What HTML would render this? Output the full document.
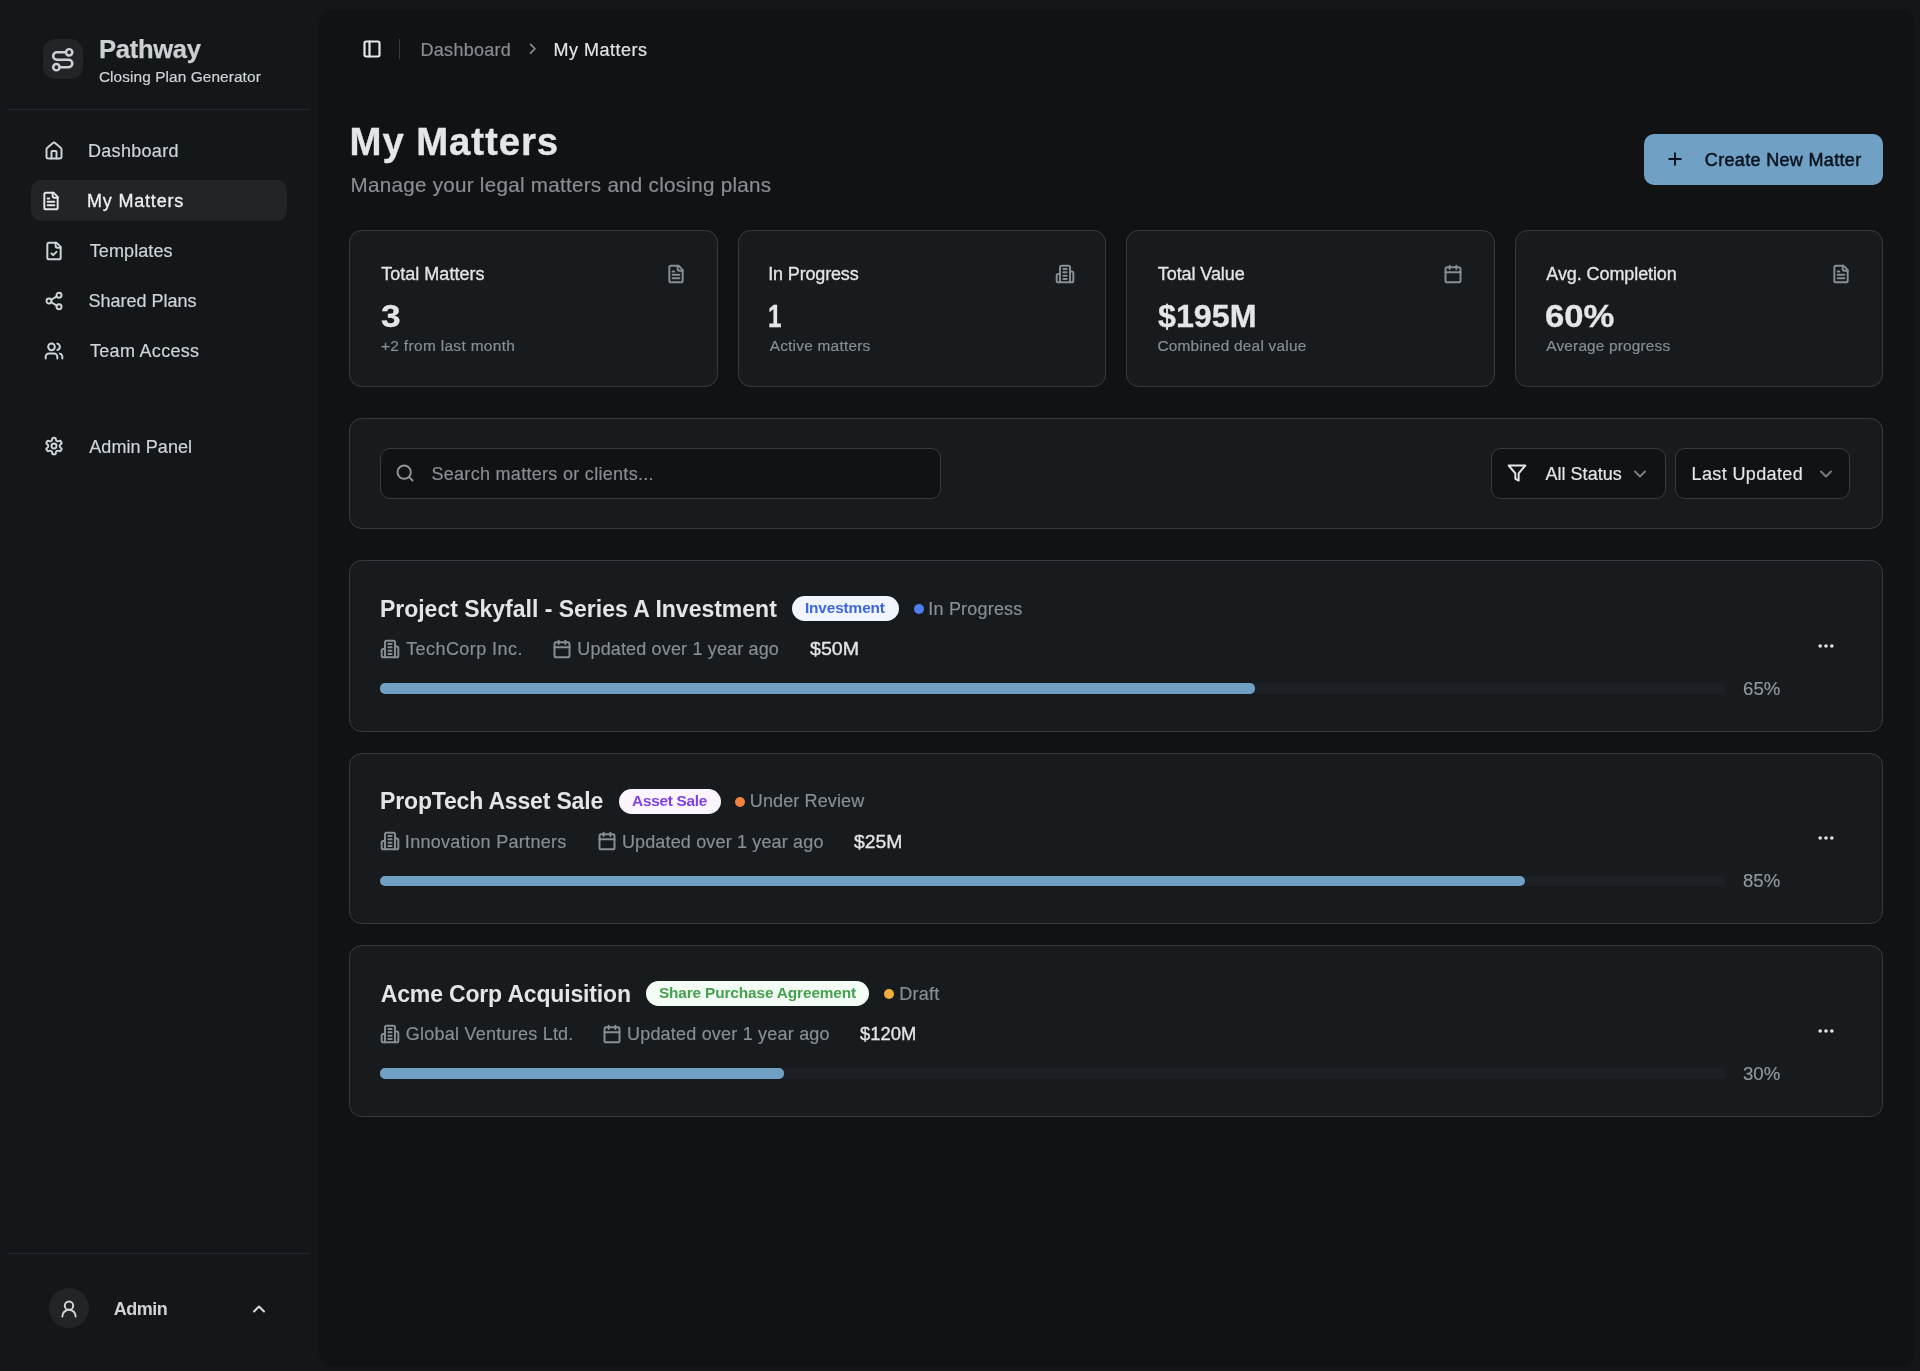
<!DOCTYPE html>
<html lang="en"><head><meta charset="utf-8"><title>My Matters - Pathway</title>
<style>
*{margin:0;padding:0;}
html,body{width:1920px;height:1371px;overflow:hidden;background:#13171a;}
body{position:relative;font-family:"Liberation Sans",Arial,sans-serif;-webkit-font-smoothing:antialiased;}
div,svg.ic,.t{position:absolute;}
#root{left:0;top:0;width:1920px;height:1371px;will-change:transform;}
.t{white-space:nowrap;line-height:1;font-weight:400;text-decoration:none;display:block;}
.card{background:#181b1e;border:1px solid #373b3f;border-radius:12.5px;box-sizing:border-box;}
</style></head>
<body>
<div id="root">
<aside>
<div style="left:43px;top:38.9px;width:40.4px;height:40.4px;background:#212528;border-radius:12.5px;"></div>
<svg class="ic" style="left:50.45px;top:47.05px;width:25.5px;height:25.5px;color:#cdd0d3;" viewBox="0 0 24 24" fill="none" stroke="currentColor" stroke-width="2.35" stroke-linecap="round" stroke-linejoin="round"><circle cx="6" cy="19" r="3"/><path d="M9 19h8.5a3.5 3.5 0 0 0 0-7h-11a3.5 3.5 0 0 1 0-7H15"/><circle cx="18" cy="5" r="3"/></svg>
<div id="brand" class="t" style="left:99.03px;top:36.98px;font-size:25.6px;color:#cdd0d3;letter-spacing:-0.315px;font-weight:700;-webkit-text-stroke:0.25px #cdd0d3;">Pathway</div>
<div id="brand2" class="t" style="left:98.91px;top:68.56px;font-size:15.4px;color:#d0d3d6;letter-spacing:0.089px;-webkit-text-stroke:0.18px #d0d3d6;">Closing Plan Generator</div>
<div style="left:8px;top:109px;width:302px;height:1.25px;background:#23272b;"></div>
<nav>
<svg class="ic" style="left:43.60px;top:140.90px;width:20px;height:20px;color:#d0d4d7;" viewBox="0 0 24 24" fill="none" stroke="currentColor" stroke-width="2.35" stroke-linecap="round" stroke-linejoin="round"><path d="M15 21v-8a1 1 0 0 0-1-1h-4a1 1 0 0 0-1 1v8"/><path d="M3 10a2 2 0 0 1 .709-1.528l7-5.999a2 2 0 0 1 2.582 0l7 5.999A2 2 0 0 1 21 10v9a2 2 0 0 1-2 2H5a2 2 0 0 1-2-2z"/></svg>
<a id="nav0" class="t" style="left:88.02px;top:142.41px;font-size:18px;color:#d0d4d7;letter-spacing:0.298px;-webkit-text-stroke:0.18px #d0d4d7;">Dashboard</a>
<div style="left:31px;top:180px;width:255.5px;height:40.75px;background:#212528;border-radius:10px;"></div>
<svg class="ic" style="left:41.40px;top:190.90px;width:20px;height:20px;color:#e4e6e8;" viewBox="0 0 24 24" fill="none" stroke="currentColor" stroke-width="2.35" stroke-linecap="round" stroke-linejoin="round"><path d="M15 2H6a2 2 0 0 0-2 2v16a2 2 0 0 0 2 2h12a2 2 0 0 0 2-2V7Z"/><path d="M14 2v4a2 2 0 0 0 2 2h4"/><path d="M10 9H8"/><path d="M16 13H8"/><path d="M16 17H8"/></svg>
<a id="nav1" class="t" style="left:86.96px;top:192.41px;font-size:18px;color:#f0f1f2;letter-spacing:0.812px;-webkit-text-stroke:0.3px #f0f1f2;">My Matters</a>
<svg class="ic" style="left:43.60px;top:240.90px;width:20px;height:20px;color:#d0d4d7;" viewBox="0 0 24 24" fill="none" stroke="currentColor" stroke-width="2.35" stroke-linecap="round" stroke-linejoin="round"><path d="M15 2H6a2 2 0 0 0-2 2v16a2 2 0 0 0 2 2h12a2 2 0 0 0 2-2V7Z"/><path d="M14 2v4a2 2 0 0 0 2 2h4"/><path d="m9 15 2 2 4-4"/></svg>
<a id="nav2" class="t" style="left:89.71px;top:242.41px;font-size:18px;color:#d0d4d7;letter-spacing:0.104px;-webkit-text-stroke:0.18px #d0d4d7;">Templates</a>
<svg class="ic" style="left:43.60px;top:290.90px;width:20px;height:20px;color:#d0d4d7;" viewBox="0 0 24 24" fill="none" stroke="currentColor" stroke-width="2.35" stroke-linecap="round" stroke-linejoin="round"><circle cx="18" cy="5" r="3"/><circle cx="6" cy="12" r="3"/><circle cx="18" cy="19" r="3"/><line x1="8.59" x2="15.42" y1="13.51" y2="17.49"/><line x1="15.41" x2="8.59" y1="6.51" y2="10.49"/></svg>
<a id="nav3" class="t" style="left:88.52px;top:292.41px;font-size:18px;color:#d0d4d7;letter-spacing:-0.000px;-webkit-text-stroke:0.18px #d0d4d7;">Shared Plans</a>
<svg class="ic" style="left:43.60px;top:340.90px;width:20px;height:20px;color:#d0d4d7;" viewBox="0 0 24 24" fill="none" stroke="currentColor" stroke-width="2.35" stroke-linecap="round" stroke-linejoin="round"><path d="M16 21v-2a4 4 0 0 0-4-4H6a4 4 0 0 0-4 4v2"/><circle cx="9" cy="7" r="4"/><path d="M22 21v-2a4 4 0 0 0-3-3.87"/><path d="M16 3.13a4 4 0 0 1 0 7.75"/></svg>
<a id="nav4" class="t" style="left:90.00px;top:342.41px;font-size:18px;color:#d0d4d7;letter-spacing:0.300px;-webkit-text-stroke:0.18px #d0d4d7;">Team Access</a>
<svg class="ic" style="left:43.60px;top:436.40px;width:20px;height:20px;color:#d0d4d7;" viewBox="0 0 24 24" fill="none" stroke="currentColor" stroke-width="2.35" stroke-linecap="round" stroke-linejoin="round"><path d="M12.22 2h-.44a2 2 0 0 0-2 2v.18a2 2 0 0 1-1 1.73l-.43.25a2 2 0 0 1-2 0l-.15-.08a2 2 0 0 0-2.73.73l-.22.38a2 2 0 0 0 .73 2.73l.15.1a2 2 0 0 1 1 1.72v.51a2 2 0 0 1-1 1.74l-.15.09a2 2 0 0 0-.73 2.73l.22.38a2 2 0 0 0 2.73.73l.15-.08a2 2 0 0 1 2 0l.43.25a2 2 0 0 1 1 1.73V20a2 2 0 0 0 2 2h.44a2 2 0 0 0 2-2v-.18a2 2 0 0 1 1-1.73l.43-.25a2 2 0 0 1 2 0l.15.08a2 2 0 0 0 2.73-.73l.22-.39a2 2 0 0 0-.73-2.73l-.15-.08a2 2 0 0 1-1-1.74v-.5a2 2 0 0 1 1-1.74l.15-.09a2 2 0 0 0 .73-2.73l-.22-.38a2 2 0 0 0-2.73-.73l-.15.08a2 2 0 0 1-2 0l-.43-.25a2 2 0 0 1-1-1.73V4a2 2 0 0 0-2-2z"/><circle cx="12" cy="12" r="3"/></svg>
<a id="nav5" class="t" style="left:89.30px;top:438.11px;font-size:18px;color:#d0d4d7;letter-spacing:0.070px;-webkit-text-stroke:0.18px #d0d4d7;">Admin Panel</a>
</nav>
<div style="left:8px;top:1252.5px;width:302px;height:1.25px;background:#23272b;"></div>
<div style="left:48.7px;top:1288.4px;width:40px;height:40px;background:#212528;border-radius:50%;"></div>
<svg class="ic" style="left:58.70px;top:1298.60px;width:20px;height:20px;color:#d4d7da;" viewBox="0 0 24 24" fill="none" stroke="currentColor" stroke-width="2.35" stroke-linecap="round" stroke-linejoin="round"><circle cx="12" cy="8" r="5"/><path d="M20 21a8 8 0 0 0-16 0"/></svg>
<span id="admin" class="t" style="left:113.84px;top:1299.91px;font-size:18px;color:#d0d3d6;letter-spacing:-0.539px;font-weight:700;">Admin</span>
<svg class="ic" style="left:248.75px;top:1298.50px;width:20px;height:20px;color:#d9dcdf;" viewBox="0 0 24 24" fill="none" stroke="currentColor" stroke-width="2.35" stroke-linecap="round" stroke-linejoin="round"><path d="m18 15-6-6-6 6"/></svg>
</aside>
<main>
<div style="left:320px;top:10px;width:1593px;height:1353.5px;background:#111214;border-radius:12px;box-shadow:0 1px 3px rgba(0,0,0,.35);"></div>
<header>
<svg class="ic" style="left:361.80px;top:39.00px;width:20px;height:20px;color:#e4e6e8;" viewBox="0 0 24 24" fill="none" stroke="currentColor" stroke-width="2.6" stroke-linecap="round" stroke-linejoin="round"><rect width="18" height="18" x="3" y="3" rx="2"/><path d="M9 3v18"/></svg>
<div style="left:399px;top:39px;width:1.25px;height:20px;background:#373b3f;"></div>
<a id="bc1" class="t" style="left:420.59px;top:40.51px;font-size:18px;color:#898e94;letter-spacing:0.268px;-webkit-text-stroke:0.18px #898e94;">Dashboard</a>
<svg class="ic" style="left:523.65px;top:40.25px;width:17.5px;height:17.5px;color:#898e94;" viewBox="0 0 24 24" fill="none" stroke="currentColor" stroke-width="2.35" stroke-linecap="round" stroke-linejoin="round"><path d="m9 18 6-6-6-6"/></svg>
<span id="bc2" class="t" style="left:553.59px;top:40.51px;font-size:18px;color:#e3e5e7;letter-spacing:0.490px;-webkit-text-stroke:0.18px #e3e5e7;">My Matters</span>
</header>
<h1 id="h1" class="t" style="left:349.58px;top:122.99px;font-size:38.4px;color:#e4e6e8;letter-spacing:0.892px;font-weight:700;-webkit-text-stroke:0.35px #e4e6e8;">My Matters</h1>
<p id="sub" class="t" style="left:350.54px;top:174.56px;font-size:20.6px;color:#898e94;letter-spacing:0.281px;-webkit-text-stroke:0.18px #898e94;">Manage your legal matters and closing plans</p>
<div class="btn" style="left:1643.8px;top:134.25px;width:239.4px;height:50.5px;background:#70a0c3;border-radius:10px;"></div>
<svg class="ic" style="left:1664.90px;top:149.30px;width:20px;height:20px;color:#0a1320;" viewBox="0 0 24 24" fill="none" stroke="currentColor" stroke-width="2.35" stroke-linecap="round" stroke-linejoin="round"><path d="M5 12h14"/><path d="M12 5v14"/></svg>
<span id="btn" class="t" style="left:1704.83px;top:150.96px;font-size:18px;color:#0a1320;letter-spacing:0.330px;-webkit-text-stroke:0.5px #0a1320;">Create New Matter</span>
<section>
<div class="card" style="left:349.25px;top:230px;width:368.4375px;height:157px;"></div>
<h3 id="st0a" class="t" style="left:381.13px;top:264.76px;font-size:18px;color:#e3e5e7;letter-spacing:0.029px;-webkit-text-stroke:0.3px #e3e5e7;">Total Matters</h3>
<svg class="ic" style="left:665.84px;top:264.00px;width:20px;height:20px;color:#898e94;" viewBox="0 0 24 24" fill="none" stroke="currentColor" stroke-width="2.35" stroke-linecap="round" stroke-linejoin="round"><path d="M15 2H6a2 2 0 0 0-2 2v16a2 2 0 0 0 2 2h12a2 2 0 0 0 2-2V7Z"/><path d="M14 2v4a2 2 0 0 0 2 2h4"/><path d="M10 9H8"/><path d="M16 13H8"/><path d="M16 17H8"/></svg>
<div id="st0b" class="t" style="left:380.56px;top:301.53px;font-size:30.8px;color:#e4e6e8;letter-spacing:0.000px;font-weight:700;-webkit-text-stroke:0.3px #e4e6e8;transform:scaleX(1.1447);transform-origin:0 50%;">3</div>
<p id="st0c" class="t" style="left:381.00px;top:337.76px;font-size:15.4px;color:#898e94;letter-spacing:0.349px;-webkit-text-stroke:0.18px #898e94;">+2 from last month</p>
</section>
<section>
<div class="card" style="left:737.6875px;top:230px;width:368.4375px;height:157px;"></div>
<h3 id="st1a" class="t" style="left:768.29px;top:264.76px;font-size:18px;color:#e3e5e7;letter-spacing:-0.162px;-webkit-text-stroke:0.3px #e3e5e7;">In Progress</h3>
<svg class="ic" style="left:1055.08px;top:264.00px;width:20px;height:20px;color:#898e94;" viewBox="0 0 24 24" fill="none" stroke="currentColor" stroke-width="2.35" stroke-linecap="round" stroke-linejoin="round"><path d="M6 22V4a2 2 0 0 1 2-2h8a2 2 0 0 1 2 2v18Z"/><path d="M6 12H4a2 2 0 0 0-2 2v6a2 2 0 0 0 2 2h2"/><path d="M18 9h2a2 2 0 0 1 2 2v9a2 2 0 0 1-2 2h-2"/><path d="M10 6h4"/><path d="M10 10h4"/><path d="M10 14h4"/><path d="M10 18h4"/></svg>
<div id="st1b" class="t" style="left:768.23px;top:301.53px;font-size:30.8px;color:#e4e6e8;letter-spacing:0.000px;font-weight:700;-webkit-text-stroke:0.3px #e4e6e8;transform:scaleX(0.788);transform-origin:0 50%;">1</div>
<p id="st1c" class="t" style="left:769.66px;top:337.76px;font-size:15.4px;color:#898e94;letter-spacing:0.241px;-webkit-text-stroke:0.18px #898e94;">Active matters</p>
</section>
<section>
<div class="card" style="left:1126.125px;top:230px;width:368.4375px;height:157px;"></div>
<h3 id="st2a" class="t" style="left:1157.80px;top:264.76px;font-size:18px;color:#e3e5e7;letter-spacing:-0.085px;-webkit-text-stroke:0.3px #e3e5e7;">Total Value</h3>
<svg class="ic" style="left:1442.71px;top:264.00px;width:20px;height:20px;color:#898e94;" viewBox="0 0 24 24" fill="none" stroke="currentColor" stroke-width="2.35" stroke-linecap="round" stroke-linejoin="round"><path d="M8 2v4"/><path d="M16 2v4"/><rect width="18" height="18" x="3" y="4" rx="2"/><path d="M3 10h18"/></svg>
<div id="st2b" class="t" style="left:1157.78px;top:301.53px;font-size:30.8px;color:#e4e6e8;letter-spacing:0.000px;font-weight:700;-webkit-text-stroke:0.3px #e4e6e8;transform:scaleX(1.047);transform-origin:0 50%;">$195M</div>
<p id="st2c" class="t" style="left:1157.42px;top:337.76px;font-size:15.4px;color:#898e94;letter-spacing:0.241px;-webkit-text-stroke:0.18px #898e94;">Combined deal value</p>
</section>
<section>
<div class="card" style="left:1514.5625px;top:230px;width:368.4375px;height:157px;"></div>
<h3 id="st3a" class="t" style="left:1546.35px;top:264.76px;font-size:18px;color:#e3e5e7;letter-spacing:-0.092px;-webkit-text-stroke:0.3px #e3e5e7;">Avg. Completion</h3>
<svg class="ic" style="left:1831.15px;top:264.00px;width:20px;height:20px;color:#898e94;" viewBox="0 0 24 24" fill="none" stroke="currentColor" stroke-width="2.35" stroke-linecap="round" stroke-linejoin="round"><path d="M15 2H6a2 2 0 0 0-2 2v16a2 2 0 0 0 2 2h12a2 2 0 0 0 2-2V7Z"/><path d="M14 2v4a2 2 0 0 0 2 2h4"/><path d="M10 9H8"/><path d="M16 13H8"/><path d="M16 17H8"/></svg>
<div id="st3b" class="t" style="left:1545.13px;top:301.53px;font-size:30.8px;color:#e4e6e8;letter-spacing:0.000px;font-weight:700;-webkit-text-stroke:0.3px #e4e6e8;transform:scaleX(1.1255);transform-origin:0 50%;">60%</div>
<p id="st3c" class="t" style="left:1546.34px;top:337.76px;font-size:15.4px;color:#898e94;letter-spacing:0.172px;-webkit-text-stroke:0.18px #898e94;">Average progress</p>
</section>
<section>
<div class="card" style="left:349.25px;top:417.5px;width:1533.75px;height:111.5px;"></div>
<div style="left:379.9px;top:448px;width:561.5px;height:51px;background:#111214;border:1px solid #373b3f;border-radius:10px;box-sizing:border-box;"></div>
<svg class="ic" style="left:394.80px;top:463.30px;width:20px;height:20px;color:#8f949a;" viewBox="0 0 24 24" fill="none" stroke="currentColor" stroke-width="2.35" stroke-linecap="round" stroke-linejoin="round"><circle cx="11" cy="11" r="8"/><path d="m21 21-4.3-4.3"/></svg>
<span id="ph" class="t" style="left:431.44px;top:464.76px;font-size:18px;color:#898e94;letter-spacing:0.298px;-webkit-text-stroke:0.18px #898e94;">Search matters or clients...</span>
<div style="left:1490.8px;top:448px;width:175px;height:51px;background:#111214;border:1px solid #373b3f;border-radius:10px;box-sizing:border-box;"></div>
<svg class="ic" style="left:1506.90px;top:463.20px;width:20px;height:20px;color:#e4e6e8;" viewBox="0 0 24 24" fill="none" stroke="currentColor" stroke-width="2.35" stroke-linecap="round" stroke-linejoin="round"><polygon points="22 3 2 3 10 12.46 10 19 14 21 14 12.46 22 3"/></svg>
<span id="sel1" class="t" style="left:1545.52px;top:464.76px;font-size:18px;color:#e3e5e7;letter-spacing:0.018px;-webkit-text-stroke:0.18px #e3e5e7;">All Status</span>
<svg class="ic" style="left:1630.00px;top:463.50px;width:20px;height:20px;color:#e4e6e8;opacity:0.5;" viewBox="0 0 24 24" fill="none" stroke="currentColor" stroke-width="2.35" stroke-linecap="round" stroke-linejoin="round"><path d="m6 9 6 6 6-6"/></svg>
<div style="left:1675.4px;top:448px;width:175px;height:51px;background:#111214;border:1px solid #373b3f;border-radius:10px;box-sizing:border-box;"></div>
<span id="sel2" class="t" style="left:1691.56px;top:464.76px;font-size:18px;color:#e3e5e7;letter-spacing:0.368px;-webkit-text-stroke:0.18px #e3e5e7;">Last Updated</span>
<svg class="ic" style="left:1815.80px;top:463.50px;width:20px;height:20px;color:#e4e6e8;opacity:0.5;" viewBox="0 0 24 24" fill="none" stroke="currentColor" stroke-width="2.35" stroke-linecap="round" stroke-linejoin="round"><path d="m6 9 6 6 6-6"/></svg>
</section>
<article>
<div class="card" style="left:349.25px;top:560.0px;width:1533.75px;height:171.5px;"></div>
<h2 id="m0t" class="t" style="left:379.90px;top:597.53px;font-size:23px;color:#e3e5e7;letter-spacing:-0.006px;font-weight:700;">Project Skyfall - Series A Investment</h2>
<div style="left:792.2px;top:596.0px;width:106.39999999999998px;height:25px;background:#f1f5ff;border-radius:13px;"></div>
<span id="m0b" class="t" style="left:804.89px;top:600.46px;font-size:15.4px;color:#3d66de;letter-spacing:-0.129px;font-weight:700;">Investment</span>
<div style="left:913.9px;top:604.0px;width:10px;height:10px;background:#4f7df5;border-radius:50%;"></div>
<span id="m0s" class="t" style="left:928.29px;top:599.76px;font-size:18px;color:#898e94;letter-spacing:0.200px;-webkit-text-stroke:0.18px #898e94;">In Progress</span>
<svg class="ic" style="left:380.00px;top:638.70px;width:20px;height:20px;color:#898e94;" viewBox="0 0 24 24" fill="none" stroke="currentColor" stroke-width="2.35" stroke-linecap="round" stroke-linejoin="round"><path d="M6 22V4a2 2 0 0 1 2-2h8a2 2 0 0 1 2 2v18Z"/><path d="M6 12H4a2 2 0 0 0-2 2v6a2 2 0 0 0 2 2h2"/><path d="M18 9h2a2 2 0 0 1 2 2v9a2 2 0 0 1-2 2h-2"/><path d="M10 6h4"/><path d="M10 10h4"/><path d="M10 14h4"/><path d="M10 18h4"/></svg>
<span id="m0c" class="t" style="left:406.13px;top:640.36px;font-size:18px;color:#898e94;letter-spacing:0.435px;-webkit-text-stroke:0.18px #898e94;">TechCorp Inc.</span>
<svg class="ic" style="left:551.50px;top:638.70px;width:20px;height:20px;color:#898e94;" viewBox="0 0 24 24" fill="none" stroke="currentColor" stroke-width="2.35" stroke-linecap="round" stroke-linejoin="round"><path d="M8 2v4"/><path d="M16 2v4"/><rect width="18" height="18" x="3" y="4" rx="2"/><path d="M3 10h18"/></svg>
<span id="m0u" class="t" style="left:577.32px;top:640.36px;font-size:18px;color:#898e94;letter-spacing:0.156px;-webkit-text-stroke:0.18px #898e94;">Updated over 1 year ago</span>
<span id="m0v" class="t" style="left:809.70px;top:640.36px;font-size:18px;color:#e3e5e7;letter-spacing:0.000px;-webkit-text-stroke:0.33px #e3e5e7;transform:scaleX(1.0896);transform-origin:0 50%;">$50M</span>
<div style="left:379.9px;top:683.3px;width:1346.6px;height:10.4px;background:#1c2024;border-radius:5px;"></div>
<div style="left:379.9px;top:683.3px;width:875.29px;height:10.4px;background:#70a0c3;border-radius:5px;"></div>
<span id="m0p" class="t" style="left:1742.60px;top:679.76px;font-size:18px;color:#92979c;letter-spacing:0.000px;-webkit-text-stroke:0.18px #92979c;transform:scaleX(1.0385);transform-origin:0 50%;">65%</span>
<svg class="ic" style="left:1816.00px;top:635.90px;width:20px;height:20px;color:#e4e6e8;" viewBox="0 0 24 24" fill="none" stroke="currentColor" stroke-width="2.35" stroke-linecap="round" stroke-linejoin="round"><circle cx="12" cy="12" r="1"/><circle cx="19" cy="12" r="1"/><circle cx="5" cy="12" r="1"/></svg>
</article>
<article>
<div class="card" style="left:349.25px;top:752.5px;width:1533.75px;height:171.5px;"></div>
<h2 id="m1t" class="t" style="left:380.10px;top:790.03px;font-size:23px;color:#e3e5e7;letter-spacing:-0.176px;font-weight:700;">PropTech Asset Sale</h2>
<div style="left:618.7px;top:788.5px;width:102.0px;height:25px;background:#faf5ff;border-radius:13px;"></div>
<span id="m1b" class="t" style="left:632.08px;top:792.96px;font-size:15.4px;color:#8040e4;letter-spacing:-0.285px;font-weight:700;">Asset Sale</span>
<div style="left:735.3px;top:796.5px;width:10px;height:10px;background:#f08240;border-radius:50%;"></div>
<span id="m1s" class="t" style="left:749.77px;top:792.26px;font-size:18px;color:#898e94;letter-spacing:0.127px;-webkit-text-stroke:0.18px #898e94;">Under Review</span>
<svg class="ic" style="left:380.00px;top:831.20px;width:20px;height:20px;color:#898e94;" viewBox="0 0 24 24" fill="none" stroke="currentColor" stroke-width="2.35" stroke-linecap="round" stroke-linejoin="round"><path d="M6 22V4a2 2 0 0 1 2-2h8a2 2 0 0 1 2 2v18Z"/><path d="M6 12H4a2 2 0 0 0-2 2v6a2 2 0 0 0 2 2h2"/><path d="M18 9h2a2 2 0 0 1 2 2v9a2 2 0 0 1-2 2h-2"/><path d="M10 6h4"/><path d="M10 10h4"/><path d="M10 14h4"/><path d="M10 18h4"/></svg>
<span id="m1c" class="t" style="left:404.83px;top:832.86px;font-size:18px;color:#898e94;letter-spacing:0.299px;-webkit-text-stroke:0.18px #898e94;">Innovation Partners</span>
<svg class="ic" style="left:596.60px;top:831.20px;width:20px;height:20px;color:#898e94;" viewBox="0 0 24 24" fill="none" stroke="currentColor" stroke-width="2.35" stroke-linecap="round" stroke-linejoin="round"><path d="M8 2v4"/><path d="M16 2v4"/><rect width="18" height="18" x="3" y="4" rx="2"/><path d="M3 10h18"/></svg>
<span id="m1u" class="t" style="left:621.88px;top:832.86px;font-size:18px;color:#898e94;letter-spacing:0.155px;-webkit-text-stroke:0.18px #898e94;">Updated over 1 year ago</span>
<span id="m1v" class="t" style="left:854.43px;top:832.86px;font-size:18px;color:#e3e5e7;letter-spacing:0.000px;-webkit-text-stroke:0.33px #e3e5e7;transform:scaleX(1.0729);transform-origin:0 50%;">$25M</span>
<div style="left:379.9px;top:875.8px;width:1346.6px;height:10.4px;background:#1c2024;border-radius:5px;"></div>
<div style="left:379.9px;top:875.8px;width:1144.61px;height:10.4px;background:#70a0c3;border-radius:5px;"></div>
<span id="m1p" class="t" style="left:1742.53px;top:872.26px;font-size:18px;color:#92979c;letter-spacing:0.000px;-webkit-text-stroke:0.18px #92979c;transform:scaleX(1.0327);transform-origin:0 50%;">85%</span>
<svg class="ic" style="left:1816.00px;top:828.40px;width:20px;height:20px;color:#e4e6e8;" viewBox="0 0 24 24" fill="none" stroke="currentColor" stroke-width="2.35" stroke-linecap="round" stroke-linejoin="round"><circle cx="12" cy="12" r="1"/><circle cx="19" cy="12" r="1"/><circle cx="5" cy="12" r="1"/></svg>
</article>
<article>
<div class="card" style="left:349.25px;top:945.0px;width:1533.75px;height:171.5px;"></div>
<h2 id="m2t" class="t" style="left:380.77px;top:982.53px;font-size:23px;color:#e3e5e7;letter-spacing:-0.161px;font-weight:700;">Acme Corp Acquisition</h2>
<div style="left:645.9px;top:981.0px;width:223.5px;height:25px;background:#f3fdf5;border-radius:13px;"></div>
<span id="m2b" class="t" style="left:658.90px;top:985.46px;font-size:15.4px;color:#45a04f;letter-spacing:-0.138px;font-weight:700;">Share Purchase Agreement</span>
<div style="left:884.4px;top:989.0px;width:10px;height:10px;background:#e9b13c;border-radius:50%;"></div>
<span id="m2s" class="t" style="left:899.27px;top:984.76px;font-size:18px;color:#898e94;letter-spacing:0.268px;-webkit-text-stroke:0.18px #898e94;">Draft</span>
<svg class="ic" style="left:380.00px;top:1023.70px;width:20px;height:20px;color:#898e94;" viewBox="0 0 24 24" fill="none" stroke="currentColor" stroke-width="2.35" stroke-linecap="round" stroke-linejoin="round"><path d="M6 22V4a2 2 0 0 1 2-2h8a2 2 0 0 1 2 2v18Z"/><path d="M6 12H4a2 2 0 0 0-2 2v6a2 2 0 0 0 2 2h2"/><path d="M18 9h2a2 2 0 0 1 2 2v9a2 2 0 0 1-2 2h-2"/><path d="M10 6h4"/><path d="M10 10h4"/><path d="M10 14h4"/><path d="M10 18h4"/></svg>
<span id="m2c" class="t" style="left:405.84px;top:1025.36px;font-size:18px;color:#898e94;letter-spacing:0.233px;-webkit-text-stroke:0.18px #898e94;">Global Ventures Ltd.</span>
<svg class="ic" style="left:601.80px;top:1023.70px;width:20px;height:20px;color:#898e94;" viewBox="0 0 24 24" fill="none" stroke="currentColor" stroke-width="2.35" stroke-linecap="round" stroke-linejoin="round"><path d="M8 2v4"/><path d="M16 2v4"/><rect width="18" height="18" x="3" y="4" rx="2"/><path d="M3 10h18"/></svg>
<span id="m2u" class="t" style="left:626.97px;top:1025.36px;font-size:18px;color:#898e94;letter-spacing:0.204px;-webkit-text-stroke:0.18px #898e94;">Updated over 1 year ago</span>
<span id="m2v" class="t" style="left:860.24px;top:1025.36px;font-size:18px;color:#e3e5e7;letter-spacing:0.000px;-webkit-text-stroke:0.33px #e3e5e7;transform:scaleX(1.0212);transform-origin:0 50%;">$120M</span>
<div style="left:379.9px;top:1068.3px;width:1346.6px;height:10.4px;background:#1c2024;border-radius:5px;"></div>
<div style="left:379.9px;top:1068.3px;width:403.98px;height:10.4px;background:#70a0c3;border-radius:5px;"></div>
<span id="m2p" class="t" style="left:1742.56px;top:1064.76px;font-size:18px;color:#92979c;letter-spacing:0.000px;-webkit-text-stroke:0.18px #92979c;transform:scaleX(1.0356);transform-origin:0 50%;">30%</span>
<svg class="ic" style="left:1816.00px;top:1020.90px;width:20px;height:20px;color:#e4e6e8;" viewBox="0 0 24 24" fill="none" stroke="currentColor" stroke-width="2.35" stroke-linecap="round" stroke-linejoin="round"><circle cx="12" cy="12" r="1"/><circle cx="19" cy="12" r="1"/><circle cx="5" cy="12" r="1"/></svg>
</article>
</main>
</div>
</body></html>
